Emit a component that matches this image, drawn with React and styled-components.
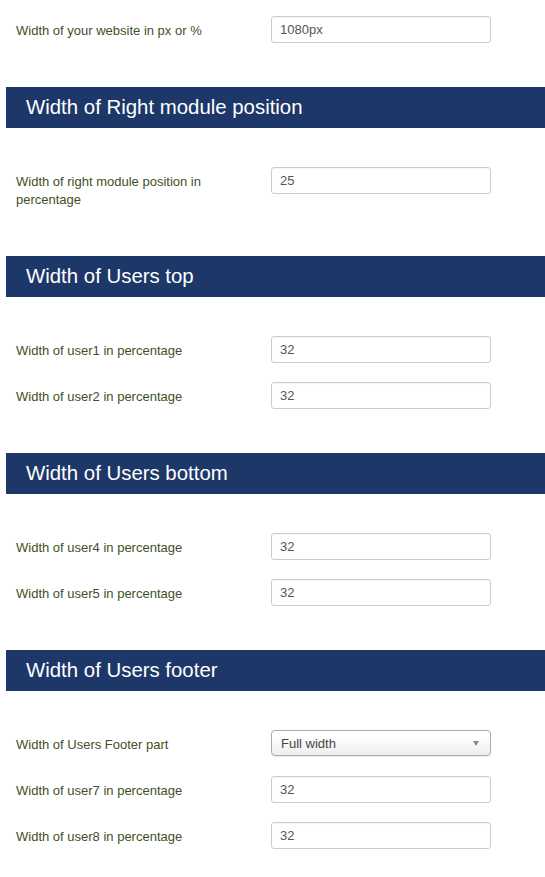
import React from 'react';
import styled, { createGlobalStyle } from 'styled-components';

const Global = createGlobalStyle`
  body {
    margin: 0;
    background: #fff;
    font-family: "Liberation Sans", Arial, sans-serif;
  }
`;

const Page = styled.div`
  padding: 16px 0 0 6px;
`;

const Header = styled.h3`
  margin: 43px 0 39px;
  height: 41px;
  display: flex;
  align-items: center;
  padding-left: 20px;
  background: #1d3768;
  color: #fff;
  font-size: 20.4px;
  font-weight: normal;
`;

const Row = styled.div`
  display: flex;
  align-items: flex-start;
  margin-bottom: 18px;
  padding-left: 10px;
`;

const Label = styled.label`
  width: 235px;
  padding: 6px 20px 4px 0;
  font-size: 13px;
  line-height: 18px;
  color: #434f26;
`;

const Input = styled.input`
  box-sizing: border-box;
  width: 220px;
  height: 27px;
  padding: 0 8px;
  border: 1px solid #ccc;
  border-radius: 3px;
  font: 13px "Liberation Sans", Arial, sans-serif;
  color: #555;
  box-shadow: inset 0 1px 1px rgba(0, 0, 0, 0.04);
  outline: none;
`;

const Select = styled.div`
  box-sizing: border-box;
  width: 220px;
  height: 26px;
  padding: 0 9px;
  display: flex;
  align-items: center;
  justify-content: space-between;
  border: 1px solid #aaa;
  border-radius: 4px;
  background: linear-gradient(#fff 20%, #eee 100%);
  box-shadow: 0 1px 1px rgba(0, 0, 0, 0.08);
  font-size: 13px;
  color: #444;
`;

const Arrow = styled.span`
  width: 0;
  height: 0;
  border-left: 3.5px solid transparent;
  border-right: 3.5px solid transparent;
  border-top: 5px solid #888;
  margin-right: 2px;
`;

const sections = [
  { title: 'Width of Right module position', fields: [['Width of right module position in percentage', '25']] },
  { title: 'Width of Users top', fields: [['Width of user1 in percentage', '32'], ['Width of user2 in percentage', '32']] },
  { title: 'Width of Users bottom', fields: [['Width of user4 in percentage', '32'], ['Width of user5 in percentage', '32']] },
  {
    title: 'Width of Users footer',
    fields: [['Width of Users Footer part', 'Full width', true], ['Width of user7 in percentage', '32'], ['Width of user8 in percentage', '32']],
  },
];

const Field = ({ label, value, select }) => (
  <Row>
    <Label>{label}</Label>
    {select ? (
      <Select>
        {value}
        <Arrow />
      </Select>
    ) : (
      <Input defaultValue={value} />
    )}
  </Row>
);

export default () => (
  <Page>
    <Global />
    <Field label="Width of your website in px or %" value="1080px" />
    {sections.map((s) => (
      <div key={s.title}>
        <Header>{s.title}</Header>
        {s.fields.map(([label, value, select]) => (
          <Field key={label} label={label} value={value} select={select} />
        ))}
      </div>
    ))}
  </Page>
);
